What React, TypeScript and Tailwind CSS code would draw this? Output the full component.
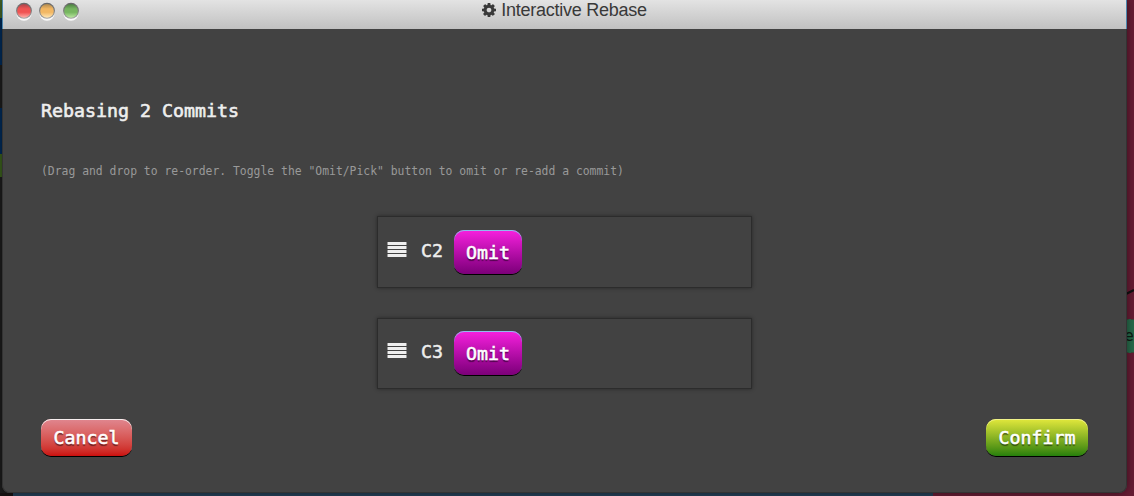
import React from "react";

const MONO = "font-['DejaVu_Sans_Mono','Liberation_Mono',monospace]";

function Backdrop() {
  return (
    <div className="col-start-1 row-start-1 flex h-[496px] flex-col overflow-hidden">
      <div className="flex h-[493px] justify-between">
        <div className="flex w-6 flex-col bg-[#1c1c1c]">
          <div className="h-[18px] bg-[#436326]" />
          <div className="h-[47px] bg-[#002a58]" />
          <div className="h-[43px]" />
          <div className="h-[46px] bg-[#002a58]" />
          <div className="h-[23px] bg-[#3a5f1c]" />
        </div>
        <div className="flex w-[14px] flex-col bg-[#651c33]">
          <svg className="mt-[285px] h-[34px] w-[14px]" viewBox="0 0 14 34">
            <path d="M3 10.5 L14 5" stroke="#101010" strokeWidth="2.4" />
          </svg>
          <div className="flex h-[34px] items-center justify-end overflow-hidden border-y border-dashed border-[#3c4638] bg-[#27694a]">
            <span className={`${MONO} text-base text-[#0d1b13]`}>e</span>
          </div>
        </div>
      </div>
      <div className="flex h-[3px]">
        <div className="w-[13px] bg-[#171313]" />
        <div className="w-[920px] bg-[#243f56]" />
        <div className="flex-1 bg-[#651c33]" />
      </div>
    </div>
  );
}

function Light({ id, edge, mid, base }: { id: string; edge: string; mid: string; base: string }) {
  return (
    <svg className="h-[21px] w-[18px]" viewBox="0 0 18 21">
      <defs>
        <linearGradient id={id} x1="0" y1="0" x2="0" y2="1">
          <stop offset="0" stopColor={edge} />
          <stop offset="0.35" stopColor={mid} />
          <stop offset="0.6" stopColor={mid} />
          <stop offset="1" stopColor={base} />
        </linearGradient>
        <linearGradient id={`${id}-ring`} x1="0" y1="0" x2="0" y2="1">
          <stop offset="0" stopColor="#666" />
          <stop offset="0.6" stopColor="#858585" />
          <stop offset="1" stopColor="#a5a5a5" />
        </linearGradient>
      </defs>
      <circle cx="9" cy="12.2" r="7.6" fill="#fafafa" />
      <circle cx="9" cy="9.8" r="8" fill={`url(#${id}-ring)`} />
      <circle cx="9" cy="9.9" r="6.8" fill={`url(#${id})`} />
    </svg>
  );
}

function CogIcon() {
  return (
    <svg className="h-[14px] w-[14px]" viewBox="0 128 1536 1536" fill="#393939">
      <path d="M1024 896q0-106-75-181t-181-75-181 75-75 181 75 181 181 75 181-75 75-181zm512-109v222q0 12-8 23t-20 13l-185 28q-19 54-39 91 35 50 107 138 10 12 10 25t-9 23q-27 37-99 108t-94 71q-12 0-26-9l-138-108q-44 23-91 38-16 136-29 186-7 28-36 28h-222q-14 0-24.5-8.5t-11.5-21.5l-28-184q-49-16-90-37l-141 107q-10 9-25 9-14 0-25-11-126-114-165-168-7-10-7-23 0-12 8-23 15-21 51-66.5t54-70.5q-27-50-41-99l-183-27q-13-2-21-12.5t-8-23.5v-222q0-12 8-23t19-13l186-28q14-46 39-92-40-57-107-138-10-12-10-24 0-10 9-23 26-36 98.5-107.5t94.5-71.5q13 0 26 10l138 107q44-23 91-38 16-136 29-186 7-28 36-28h222q14 0 24.5 8.5t11.5 21.5l28 184q49 16 90 37l142-107q9-9 24-9 13 0 25 10 129 119 165 170 7 8 7 22 0 12-8 23-15 21-51 66.5t-54 70.5q26 50 41 98l183 28q13 2 21 12.5t8 23.5z" />
    </svg>
  );
}

function TitleBar() {
  return (
    <header className="grid h-[29px] grid-cols-[90px_1fr_90px] border-x border-[#4b86ad] bg-gradient-to-b from-[#e3e3e3] to-[#c1c1c1]">
      <div className="flex gap-[5.5px] pl-[11.5px] pt-px">
        <Light id="close" edge="#a9444a" mid="#f05352" base="#ffb1aa" />
        <Light id="minimize" edge="#b08a50" mid="#f2b763" base="#ffe7b5" />
        <Light id="zoom" edge="#4c7f43" mid="#76b55f" base="#b9e8a0" />
      </div>
      <div className="flex h-[19px] items-center justify-center gap-[5px]">
        <CogIcon />
        <h1 className="pt-[2px] font-['Liberation_Sans',Arial,sans-serif] text-[18px] leading-[19px] tracking-[-0.25px] text-[#393939]">
          Interactive Rebase
        </h1>
      </div>
    </header>
  );
}

function GlossyButton({ label, look }: { label: string; look: string }) {
  return (
    <button
      className={`flex items-center justify-center rounded-[10px] text-[18.28px] text-white [-webkit-text-stroke:0.55px_white] [text-shadow:0_2px_1px_rgba(0,0,0,0.5)] ${look}`}
    >
      {label}
    </button>
  );
}

function CommitRow({ name, size }: { name: string; size: string }) {
  return (
    <li className={`flex w-[375px] items-center border border-[#2c2c2c] pl-[9px] shadow-[0_0_4px_rgba(0,0,0,0.4)] ${size}`}>
      <svg className="mb-[5px] h-4 w-5" viewBox="0 0 20 16" fill="#eeeeee">
        <rect x="0.5" y="0" width="19" height="3" rx="0.5" />
        <rect x="0.5" y="4" width="19" height="3" rx="0.5" />
        <rect x="0.5" y="8" width="19" height="3" rx="0.5" />
        <rect x="0.5" y="12" width="19" height="3" rx="0.5" />
      </svg>
      <span className="mb-[3px] ml-[14px] w-[33px] text-[18.28px] text-[#eeeeee] [-webkit-text-stroke:0.5px_#eee]">{name}</span>
      <GlossyButton
        label="Omit"
        look="h-[44px] w-[68px] pt-[2px] bg-gradient-to-b from-[#f820df] to-[#7c0079] shadow-[inset_0_1px_0_#8fbbed,0_1px_0_#000]"
      />
    </li>
  );
}

export default function App() {
  return (
    <div className={`grid h-[496px] w-[1134px] overflow-hidden ${MONO}`}>
      <Backdrop />
      <main className="z-10 col-start-1 row-start-1 ml-[2px] h-[493px] w-[1125px] overflow-hidden rounded-b-[8px] bg-[#424242] shadow-[0_0_8px_rgba(0,0,0,0.45)]">
        <TitleBar />
        <section className="flex h-[464px] flex-col rounded-b-[8px] border-x border-b border-[#333333] px-[38px] pt-[70px]">
          <h2 className="h-6 text-[18.28px] leading-6 text-[#eeeeee] [-webkit-text-stroke:0.6px_#eee]">Rebasing 2 Commits</h2>
          <p className="mt-[40px] h-4 whitespace-nowrap text-[11.4px] leading-4 text-[#999999]">
            (Drag and drop to re-order. Toggle the "Omit/Pick" button to omit or re-add a commit)
          </p>
          <ul className="mt-[37px] flex flex-col items-start gap-[30px] pl-[336px]">
            <CommitRow name="C2" size="h-[72px]" />
            <CommitRow name="C3" size="h-[71px] pb-px" />
          </ul>
          <div className="mt-[30px] flex justify-between">
            <GlossyButton
              label="Cancel"
              look="h-[37px] w-[91px] bg-gradient-to-b from-[#e08790] to-[#cb0c0c] shadow-[inset_0_1px_0_#f6eeee,0_1px_0_#000]"
            />
            <GlossyButton
              label="Confirm"
              look="h-[37px] w-[102px] bg-gradient-to-b from-[#e2e83c] to-[#24800c] shadow-[inset_0_1px_0_#f0f28a,0_1px_0_#000]"
            />
          </div>
        </section>
      </main>
    </div>
  );
}
